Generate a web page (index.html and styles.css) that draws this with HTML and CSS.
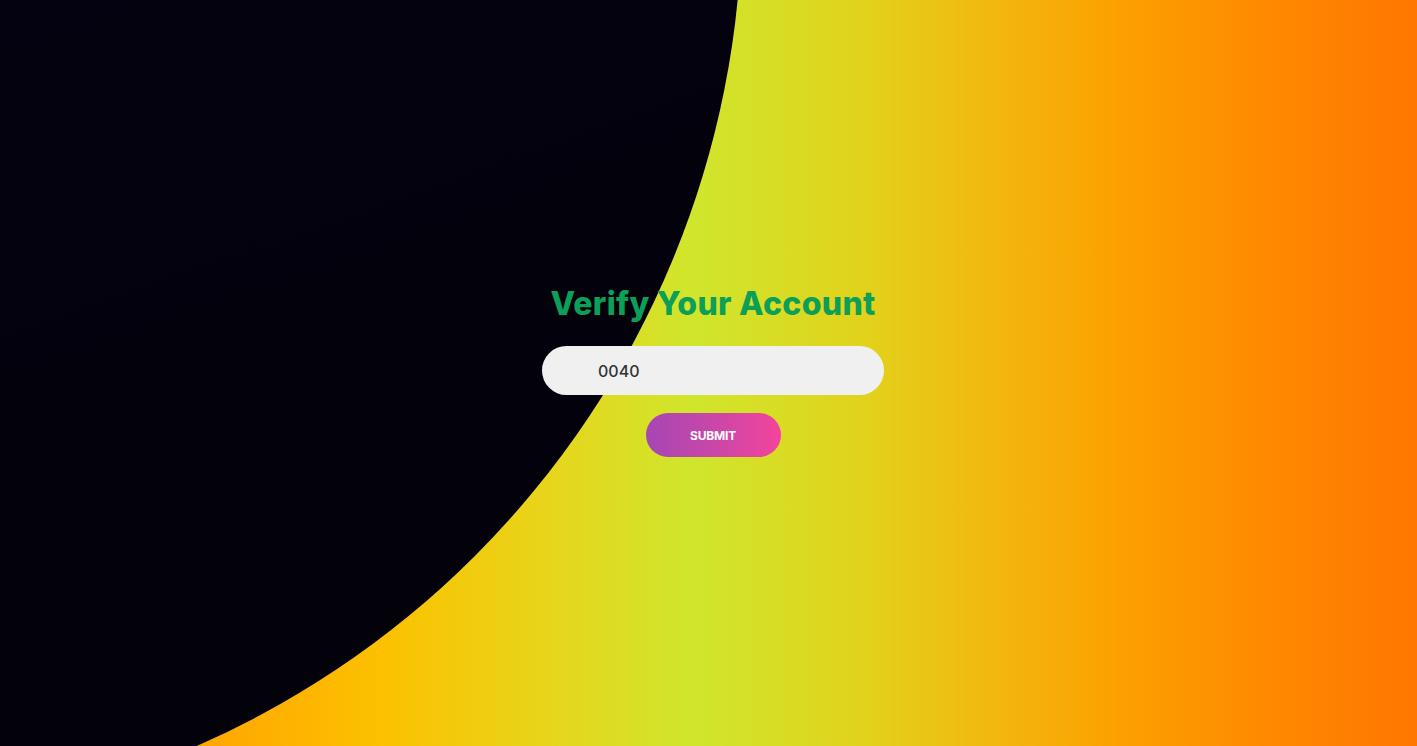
FILE: index.html
```html
<!DOCTYPE html>
<html lang="en">
<head>
<meta charset="utf-8">
<title>Verify Your Account</title>
<link rel="stylesheet" href="styles.css">
</head>
<body>
<main class="page">
  <div class="blob"></div>
  <form class="verify-form">
    <h2 class="title">Verify Your Account</h2>
    <div class="input-field">
      <input class="code-input" type="text" value="0040">
    </div>
    <button class="btn" type="button">SUBMIT</button>
  </form>
</main>
</body>
</html>
```
FILE: styles.css
```css
* {
  box-sizing: border-box;
  margin: 0;
  padding: 0;
}

html, body {
  height: 100%;
}

body {
  font-family: Inter, "Open Sans", "Liberation Sans", sans-serif;
  overflow: hidden;
}

.page {
  position: relative;
  width: 100%;
  min-height: 100vh;
  overflow: hidden;
  display: flex;
  align-items: center;
  justify-content: center;
  padding-left: 9px;
  background: linear-gradient(90deg,
    #ff8a00 0%,
    #ffa800 15%,
    #fcc100 27%,
    #e6d61c 39%,
    #cfe62c 49%,
    #e2d21c 61%,
    #f4b50c 71%,
    #fca000 79%,
    #ff8800 90%,
    #ff7600 100%);
}

.blob {
  position: absolute;
  left: -1082px;
  top: -1001px;
  width: 1824px;
  height: 1824px;
  border-radius: 50%;
  background: linear-gradient(160deg, #07041f 0%, #04020f 60%, #020007 100%);
}

.verify-form {
  position: relative;
  z-index: 1;
  display: flex;
  flex-direction: column;
  align-items: center;
  margin-top: -4px;
}

.title {
  font-size: 32px;
  font-weight: 800;
  color: #0c9f58;
  line-height: 38px;
  letter-spacing: 0.3px;
  margin-bottom: 23px;
}

.input-field {
  width: 342px;
  height: 49px;
  background: #f0f0f0;
  border-radius: 25px;
  display: flex;
  align-items: center;
  margin-bottom: 18px;
}

.code-input {
  width: 100%;
  height: 100%;
  border: none;
  outline: none;
  background: transparent;
  padding-left: 56px;
  font-family: inherit;
  font-size: 16px;
  font-weight: 500;
  color: #333;
}

.btn {
  width: 135px;
  height: 44px;
  border: none;
  border-radius: 22px;
  background: linear-gradient(90deg, #a646b4 0%, #c947a8 50%, #f4449c 100%);
  color: #fff;
  font-family: inherit;
  font-size: 12px;
  font-weight: 700;
  letter-spacing: -0.2px;
  cursor: pointer;
}
```
